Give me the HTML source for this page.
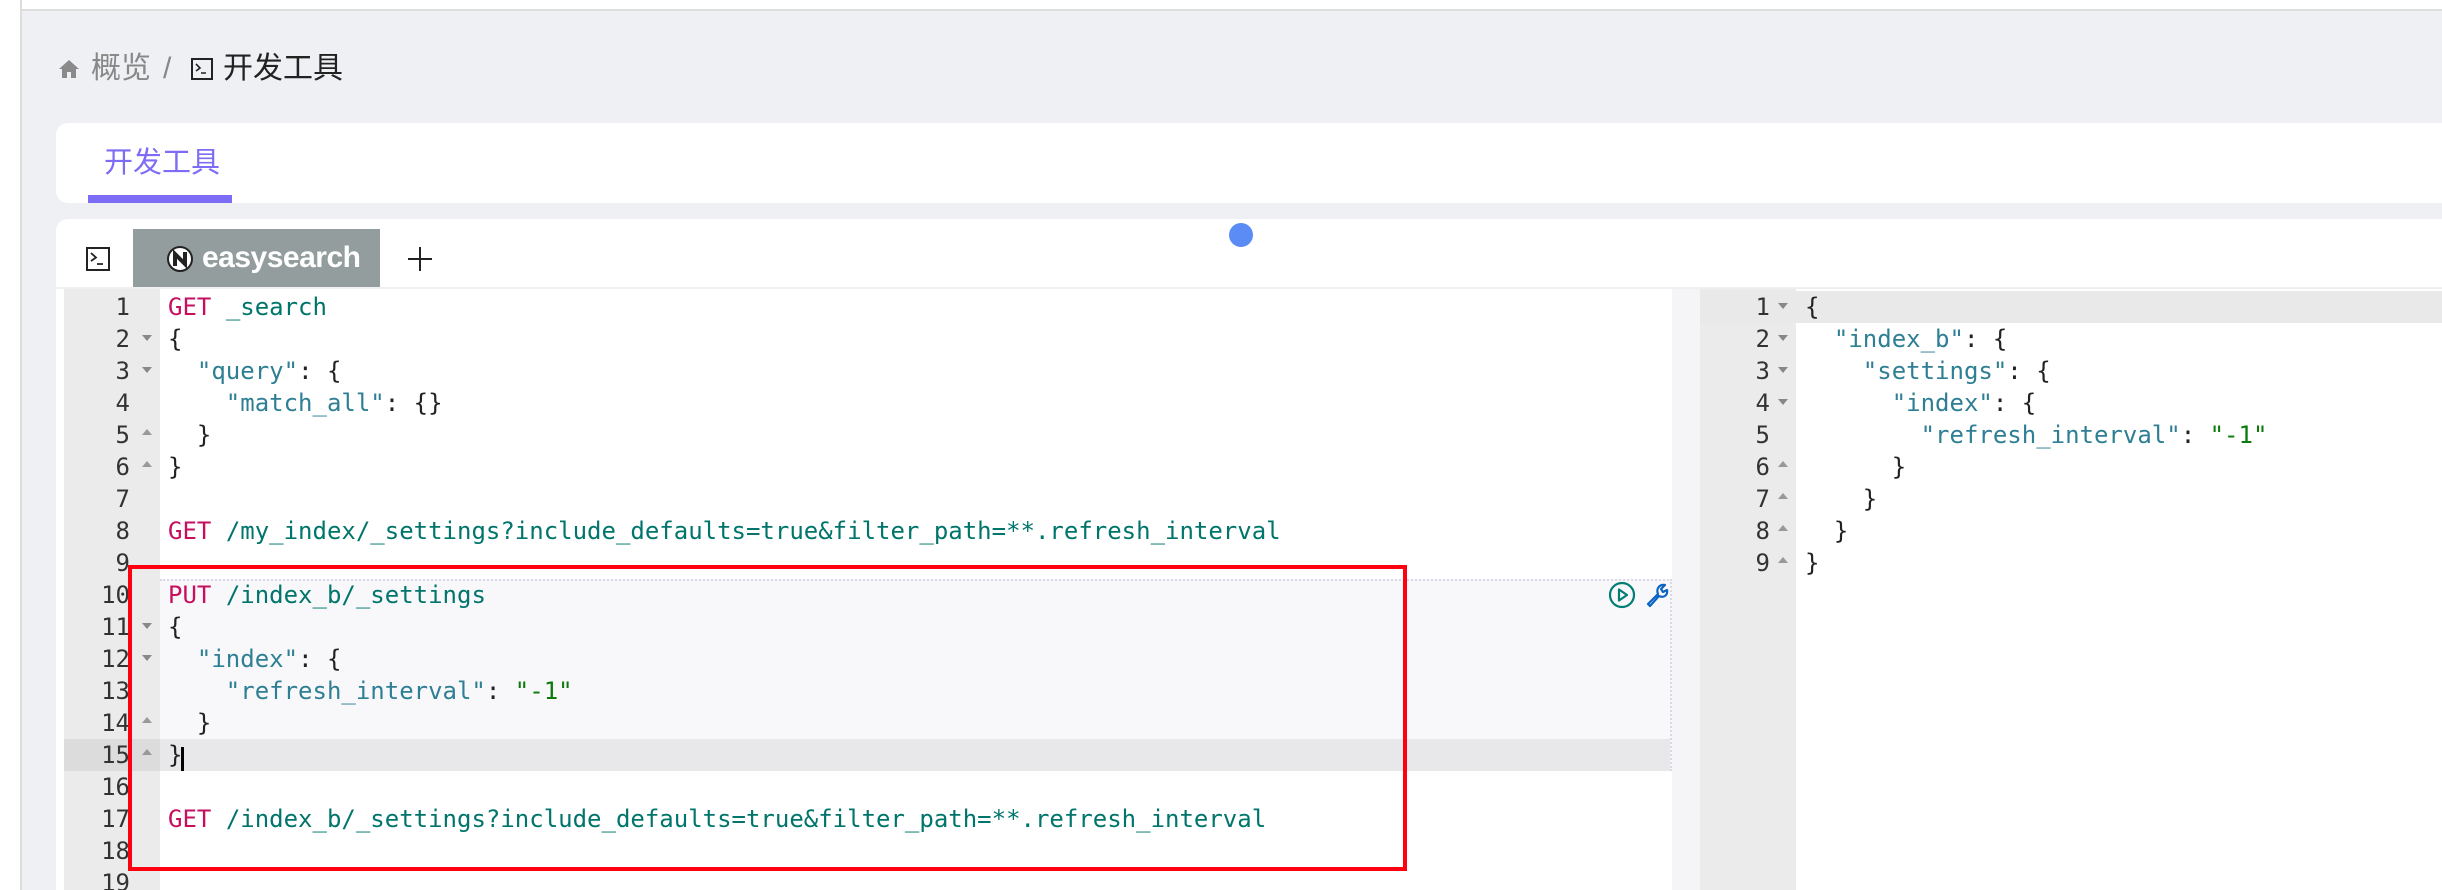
<!DOCTYPE html>
<html><head><meta charset="utf-8"><style>
*{margin:0;padding:0;box-sizing:border-box}
html,body{width:2442px;height:890px;overflow:hidden}
body{background:#eff0f4;position:relative;font-family:"Liberation Sans","Noto Sans CJK SC",sans-serif}
.abs{position:absolute}
.code{font-family:"DejaVu Sans Mono","Liberation Mono",monospace;font-size:24px;line-height:32px;white-space:pre;color:#222}
.m{color:#c6105f}.p{color:#00756b}.k{color:#2e7f94}.s{color:#0a7a0a}
.ln{position:absolute;left:64px;width:66px;text-align:right;font-family:"DejaVu Sans Mono",monospace;font-size:24px;line-height:32px;color:#333}
.rln{position:absolute;left:1700px;width:70px;text-align:right;font-family:"DejaVu Sans Mono",monospace;font-size:24px;line-height:32px;color:#333}
.ar{position:absolute;width:0;height:0;border-left:5px solid transparent;border-right:5px solid transparent}
.dn{border-top:6px solid #888}.up{border-bottom:6px solid #999}
</style></head><body>
<div class="abs" style="left:0;top:0;width:2442px;height:11px;background:#fff;border-bottom:2px solid #ddd"></div>
<div class="abs" style="left:0;top:0;width:22px;height:890px;background:#fff;border-right:2px solid #ddd"></div>

<!-- breadcrumb -->
<svg class="abs" style="left:58px;top:58px" width="22" height="22" viewBox="0 0 22 22"><path d="M11 2 L21 11 H18 V20 H13 V14 H9 V20 H4 V11 H1 Z" fill="#8a8a8a"/></svg>
<div class="abs" style="left:91px;top:49px;font-size:30px;line-height:40px;color:#888">概览</div>
<div class="abs" style="left:163px;top:49px;font-size:30px;line-height:40px;color:#888">/</div>
<svg class="abs" style="left:191px;top:58px" width="22" height="22" viewBox="0 0 22 22"><rect x="1" y="1" width="20" height="20" fill="none" stroke="#222" stroke-width="2"/><path d="M5 6 L9 10 L5 13 M10 15 H15" fill="none" stroke="#222" stroke-width="1.6"/></svg>
<div class="abs" style="left:223px;top:49px;font-size:30px;line-height:40px;color:#222">开发工具</div>

<!-- card 1 -->
<div class="abs" style="left:56px;top:123px;width:2400px;height:80px;background:#fff;border-radius:12px"></div>
<div class="abs" style="left:104px;top:143px;font-size:29px;line-height:40px;color:#7d6cf5">开发工具</div>
<div class="abs" style="left:88px;top:195px;width:144px;height:8px;background:#7d6cf5"></div>

<!-- card 2 -->
<div class="abs" style="left:56px;top:219px;width:2400px;height:671px;background:#fff;border-radius:12px 12px 0 0"></div>
<svg class="abs" style="left:86px;top:247px" width="24" height="24" viewBox="0 0 24 24"><rect x="1" y="1" width="22" height="22" fill="none" stroke="#222" stroke-width="2"/><path d="M5 6 L10 10.5 L5 14 M11 17 H17" fill="none" stroke="#222" stroke-width="1.8"/></svg>
<div class="abs" style="left:133px;top:229px;width:247px;height:60px;background:#949d9e"></div>
<svg class="abs" style="left:166px;top:245px" width="28" height="28" viewBox="0 0 28 28"><circle cx="14" cy="14" r="12" fill="#fff" stroke="#222" stroke-width="2"/><path d="M9 21 V9 L19 19 V7" fill="none" stroke="#222" stroke-width="4"/></svg>
<div class="abs" style="left:202px;top:238px;font-size:30px;line-height:40px;color:#fff;font-weight:bold;letter-spacing:-0.5px">easysearch</div>
<div class="abs" style="left:408px;top:258px;width:24px;height:2px;background:#222"></div>
<div class="abs" style="left:419px;top:247px;width:2px;height:24px;background:#222"></div>
<div class="abs" style="left:1229px;top:223px;width:24px;height:24px;border-radius:50%;background:#5b8cf5"></div>
<div class="abs" style="left:56px;top:287px;width:2400px;height:2px;background:#efefef"></div>

<!-- left editor -->
<div class="abs" style="left:64px;top:289px;width:96px;height:601px;background:#ebebeb"></div>
<div class="abs" style="left:160px;top:579px;width:1512px;height:192px;background:#f8f8fb;border-top:2px dotted #d8d8e8;border-bottom:2px dotted #d8d8e8"></div>
<div class="abs" style="left:1670px;top:579px;width:2px;height:192px;border-left:2px dotted #d8d8e8"></div>
<div class="abs" style="left:64px;top:739px;width:96px;height:32px;background:#dcdcdc"></div>
<div class="abs" style="left:160px;top:739px;width:1510px;height:32px;background:#e8e8ea"></div>

<div class="ln" style="top:291px">1</div><div class="ln" style="top:323px">2</div><div class="ln" style="top:355px">3</div><div class="ln" style="top:387px">4</div><div class="ln" style="top:419px">5</div><div class="ln" style="top:451px">6</div><div class="ln" style="top:483px">7</div><div class="ln" style="top:515px">8</div><div class="ln" style="top:547px">9</div><div class="ln" style="top:579px">10</div><div class="ln" style="top:611px">11</div><div class="ln" style="top:643px">12</div><div class="ln" style="top:675px">13</div><div class="ln" style="top:707px">14</div><div class="ln" style="top:739px">15</div><div class="ln" style="top:771px">16</div><div class="ln" style="top:803px">17</div><div class="ln" style="top:835px">18</div><div class="ln" style="top:867px">19</div>
<div class="ar dn" style="left:142px;top:335px"></div><div class="ar dn" style="left:142px;top:367px"></div><div class="ar up" style="left:142px;top:429px"></div><div class="ar up" style="left:142px;top:461px"></div>
<div class="ar dn" style="left:142px;top:623px"></div><div class="ar dn" style="left:142px;top:655px"></div><div class="ar up" style="left:142px;top:717px"></div><div class="ar up" style="left:142px;top:749px"></div>

<div class="abs code" style="left:168px;top:291px"><span class="m">GET</span> <span class="p">_search</span>
{
  <span class="k">"query"</span>: {
    <span class="k">"match_all"</span>: {}
  }
}

<span class="m">GET</span> <span class="p">/my_index/_settings?include_defaults=true&amp;filter_path=**.refresh_interval</span>

<span class="m">PUT</span> <span class="p">/index_b/_settings</span>
{
  <span class="k">"index"</span>: {
    <span class="k">"refresh_interval"</span>: <span class="s">"-1"</span>
  }
}

<span class="m">GET</span> <span class="p">/index_b/_settings?include_defaults=true&amp;filter_path=**.refresh_interval</span>
</div>
<div class="abs" style="left:181px;top:747px;width:3px;height:24px;background:#000"></div>

<svg class="abs" style="left:1608px;top:581px" width="28" height="28" viewBox="0 0 28 28"><circle cx="14" cy="14" r="12" fill="none" stroke="#017d73" stroke-width="2.2"/><path d="M11 8.5 L19 14 L11 19.5 Z" fill="none" stroke="#017d73" stroke-width="2.2" stroke-linejoin="round"/></svg>
<svg class="abs" style="left:1644px;top:581px" width="28" height="28" viewBox="0 0 28 28"><path d="M4 23 L14 13 C12 8 15 3 21 4 L17 8 L19 11 L23 9 C24 15 19 17 15 15 L6 25 Z" fill="none" stroke="#0b64c0" stroke-width="2.2" stroke-linejoin="round"/></svg>

<!-- red box -->
<div class="abs" style="left:128px;top:565px;width:1279px;height:306px;border:4px solid #ff0010"></div>

<!-- right pane -->
<div class="abs" style="left:1672px;top:289px;width:28px;height:601px;background:#f5f5f7"></div>
<div class="abs" style="left:1700px;top:289px;width:96px;height:601px;background:#ebebeb"></div>
<div class="abs" style="left:1700px;top:291px;width:742px;height:32px;background:#e9e9e9"></div>
<div class="rln" style="top:291px">1</div><div class="rln" style="top:323px">2</div><div class="rln" style="top:355px">3</div><div class="rln" style="top:387px">4</div><div class="rln" style="top:419px">5</div><div class="rln" style="top:451px">6</div><div class="rln" style="top:483px">7</div><div class="rln" style="top:515px">8</div><div class="rln" style="top:547px">9</div>
<div class="ar dn" style="left:1778px;top:303px"></div><div class="ar dn" style="left:1778px;top:335px"></div><div class="ar dn" style="left:1778px;top:367px"></div><div class="ar dn" style="left:1778px;top:399px"></div>
<div class="ar up" style="left:1778px;top:461px"></div><div class="ar up" style="left:1778px;top:493px"></div><div class="ar up" style="left:1778px;top:525px"></div><div class="ar up" style="left:1778px;top:557px"></div>
<div class="abs code" style="left:1805px;top:291px">{
  <span class="k">"index_b"</span>: {
    <span class="k">"settings"</span>: {
      <span class="k">"index"</span>: {
        <span class="k">"refresh_interval"</span>: <span class="s">"-1"</span>
      }
    }
  }
}</div>
</body></html>
